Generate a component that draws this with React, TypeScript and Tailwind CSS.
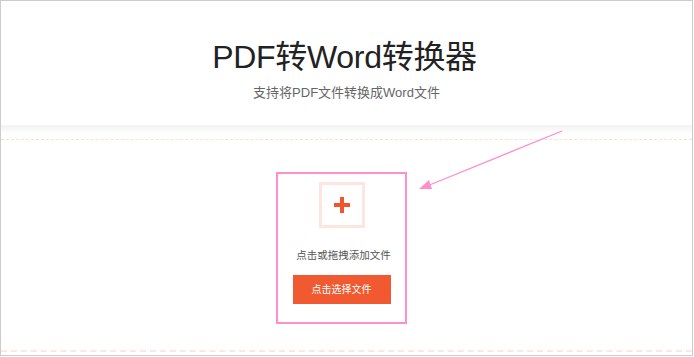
export default function App() {
  return (
    <div
      className="relative w-[693px] h-[356px] border border-[#cccccc] bg-white overflow-hidden"
      style={{ fontFamily: '"Liberation Sans", "Noto Sans CJK SC", sans-serif' }}
    >
      {/* header */}
      <div className="h-[124px] flex flex-col items-center pt-[38px]">
        <h1 className="text-[32px] leading-[36px] text-[#222222] tracking-[-0.3px] pr-[4px]">PDF转Word转换器</h1>
        <p className="mt-[10px] text-[13px] leading-[16px] text-[#666666]">支持将PDF文件转换成Word文件</p>
      </div>
      <div className="h-[9px] bg-gradient-to-b from-[#f2f2f2] to-white" />
      <div className="mt-[5px] border-t border-dashed border-[#fbe1d2]" />

      {/* upload area */}
      <div className="flex justify-center pt-[32px] pr-[10px]">
        <div className="w-[131px] h-[152px] border-2 border-[#ff8fcb] flex flex-col items-center pt-[8px]">
          <div className="w-[46px] h-[46px] border-[3px] border-[#fde6e0] flex items-center justify-center">
            <svg width="16" height="16" viewBox="0 0 16 16">
              <rect x="6" y="0" width="4" height="16" fill="#f0552e" />
              <rect x="0" y="6" width="16" height="4" fill="#f0552e" />
            </svg>
          </div>
          <p className="mt-[20px] pl-[4px] text-[10.5px] leading-[14px] text-[#555555]">点击或拖拽添加文件</p>
          <button className="mt-[13px] w-[98px] h-[29px] bg-[#f15a30] text-white text-[10px]">点击选择文件</button>
        </div>
      </div>

      <div className="absolute left-0 right-0 top-[349px] border-t-2 border-dashed border-[#fde6e6]" />

      {/* pointer arrow */}
      <svg className="absolute left-0 top-0" width="693" height="356">
        <line x1="561" y1="130" x2="426" y2="185" stroke="#ff8fcb" strokeWidth="1.3" />
        <polygon points="418,188 428,179 431,188" fill="#ff8fcb" />
      </svg>
    </div>
  )
}
